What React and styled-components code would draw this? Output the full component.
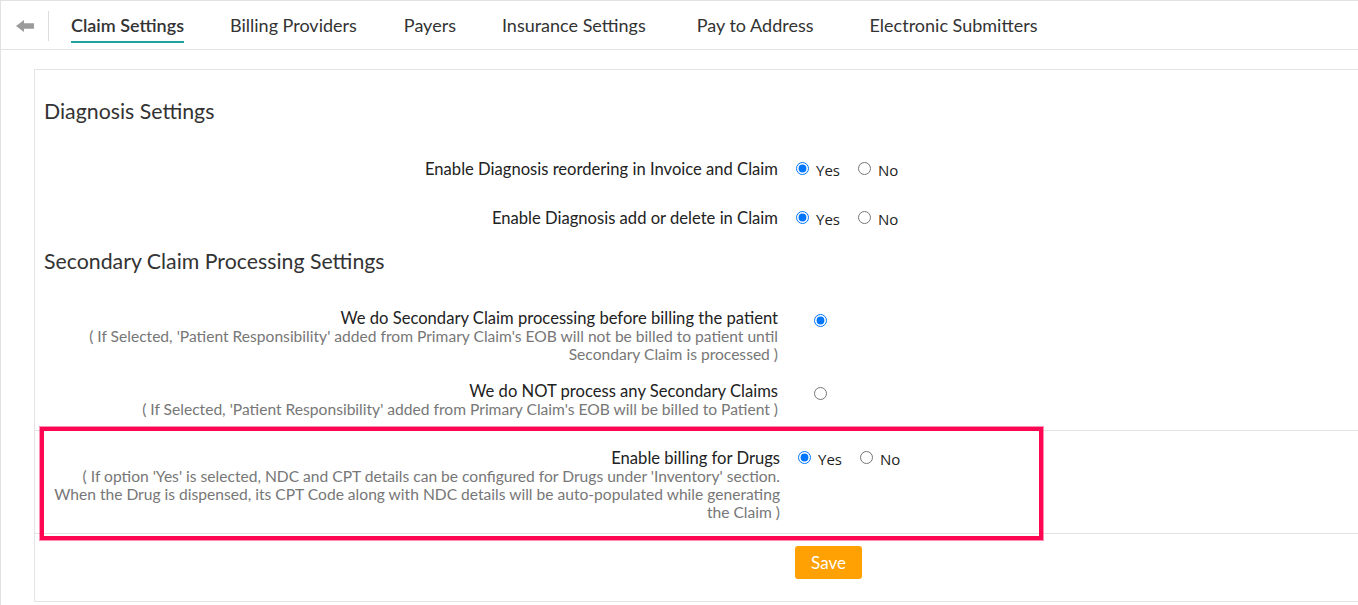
import React from 'react';
import styled, { createGlobalStyle } from 'styled-components';

const GlobalStyle = createGlobalStyle`
  html, body { margin: 0; padding: 0; background: #fff; }
  body { font-family: Lato, "Open Sans", sans-serif; color: #333; overflow: hidden; }
  * { box-sizing: border-box; }
`;

const Page = styled.div`
  width: 1358px;
  height: 605px;
  border-top: 1px solid #e2e2e2;
  border-left: 1px solid #e2e2e2;
  overflow: hidden;
`;

const Nav = styled.nav`
  display: flex;
  align-items: flex-start;
  height: 49px;
  border-bottom: 1px solid #e4e4e4;
`;

const BackButton = styled.button`
  width: 48px;
  height: 30px;
  margin-top: 10px;
  padding: 0;
  background: none;
  border: none;
  border-right: 1px solid #dcdcdc;
  display: flex;
  align-items: center;
  justify-content: center;
  cursor: pointer;
`;

const TabList = styled.div`
  display: flex;
  margin-left: 22px;
`;

const Tab = styled.a`
  margin-left: ${p => p.$gap}px;
  padding: 14px 0 6px;
  font-size: 18px;
  line-height: 20px;
  color: #333;
  font-weight: ${p => (p.$active ? 600 : 400)};
  border-bottom: 2px solid ${p => (p.$active ? '#1ea39d' : 'transparent')};
  text-decoration: none;
  white-space: nowrap;
  cursor: pointer;
`;

const Panel = styled.section`
  margin: 19px 0 0 33px;
  border: 1px solid #e4e4e4;
  border-right: none;
`;

const Heading = styled.h2`
  margin: ${p => p.$mt}px 0 ${p => p.$mb}px 9px;
  font-size: 21.3px;
  line-height: 24px;
  font-weight: 400;
  color: #333;
`;

const Row = styled.div`
  position: relative;
  display: grid;
  grid-template-columns: ${p => p.$labelWidth || 743}px auto;
  column-gap: 18px;
  align-items: start;
  padding: ${p => p.$pt}px 0 ${p => p.$pb}px;
  border-top: ${p => (p.$bordered ? '1px solid #e2e2e2' : 'none')};
  border-bottom: ${p => (p.$bordered ? '1px solid #e2e2e2' : 'none')};
`;

const Label = styled.div`
  text-align: right;
  font-size: 16.6px;
  line-height: 18px;
  color: #222;
  white-space: nowrap;
`;

const Desc = styled.div`
  font-size: 15.6px;
  line-height: 18px;
  color: #777;
`;

const Options = styled.div`
  display: flex;
  align-items: center;
  height: 18px;
  padding-left: ${p => p.$indent || 0}px;
`;

const Option = styled.label`
  display: inline-flex;
  align-items: center;
  gap: 7px;
  margin-right: 18px;
  font-family: "Open Sans", sans-serif;
  font-size: 15px;
  color: #222;
  line-height: 18px;
  padding-top: 2px;
`;

const Radio = styled.input`
  margin: 0;
  width: 13px;
  height: 13px;
  margin-top: ${p => (p.$standalone ? 4 : -3)}px;
`;

const Highlight = styled.div`
  position: absolute;
  left: 5px;
  top: -4px;
  width: 1003px;
  bottom: -7px;
  border: 4px solid #ff0652;
  box-shadow: 0 0 0 1px rgba(255, 6, 82, 0.45);
  pointer-events: none;
`;

const SaveRow = styled.div`
  display: grid;
  grid-template-columns: 743px auto;
  column-gap: 17px;
  padding: 12px 0 22px;
`;

const SaveButton = styled.button`
  grid-column: 2;
  justify-self: start;
  width: 67px;
  height: 33px;
  border: none;
  border-radius: 3px;
  background: #ffa003;
  color: #fff;
  font-family: Lato, sans-serif;
  font-size: 17px;
  cursor: pointer;
`;

const BackArrow = () => (
  <svg width="18" height="12" viewBox="0 0 18 12" aria-hidden="true">
    <polygon points="0,6 8,0 8,3.3 18,3.3 18,8.7 8,8.7 8,12" fill="#9b9b9b" />
  </svg>
);

const YesNo = ({ name, value = 'yes' }) => (
  <Options>
    <Option>
      <Radio type="radio" name={name} defaultChecked={value === 'yes'} />
      Yes
    </Option>
    <Option>
      <Radio type="radio" name={name} defaultChecked={value === 'no'} />
      No
    </Option>
  </Options>
);

const tabs = [
  { label: 'Claim Settings', gap: 0 },
  { label: 'Billing Providers', gap: 46 },
  { label: 'Payers', gap: 47 },
  { label: 'Insurance Settings', gap: 46 },
  { label: 'Pay to Address', gap: 51 },
  { label: 'Electronic Submitters', gap: 56 },
];

export default function App() {
  return (
    <>
      <GlobalStyle />
      <Page>
        <Nav>
          <BackButton aria-label="Back">
            <BackArrow />
          </BackButton>
          <TabList>
            {tabs.map((t, i) => (
              <Tab key={t.label} $gap={t.gap} $active={i === 0}>
                {t.label}
              </Tab>
            ))}
          </TabList>
        </Nav>

        <Panel>
          <Heading $mt={29} $mb={22}>Diagnosis Settings</Heading>
          <Row $pt={15} $pb={16}>
            <Label>Enable Diagnosis reordering in Invoice and Claim</Label>
            <YesNo name="reorder" />
          </Row>
          <Row $pt={15} $pb={16}>
            <Label>Enable Diagnosis add or delete in Claim</Label>
            <YesNo name="adddelete" />
          </Row>

          <Heading $mt={6} $mb={21}>Secondary Claim Processing Settings</Heading>
          <Row $pt={15} $pb={9}>
            <Label>
              We do Secondary Claim processing before billing the patient
              <Desc>
                ( If Selected, 'Patient Responsibility' added from Primary Claim's EOB will not be billed to patient until
                <br />
                Secondary Claim is processed )
              </Desc>
            </Label>
            <Options $indent={18}>
              <Radio type="radio" name="secondary" $standalone defaultChecked />
            </Options>
          </Row>
          <Row $pt={10} $pb={12}>
            <Label>
              We do NOT process any Secondary Claims
              <Desc>
                ( If Selected, 'Patient Responsibility' added from Primary Claim's EOB will be billed to Patient )
              </Desc>
            </Label>
            <Options $indent={18}>
              <Radio type="radio" name="secondary" $standalone />
            </Options>
          </Row>

          <Row $pt={18} $pb={12} $bordered $labelWidth={745}>
            <Label>
              Enable billing for Drugs
              <Desc>
                ( If option 'Yes' is selected, NDC and CPT details can be configured for Drugs under 'Inventory' section.
                <br />
                When the Drug is dispensed, its CPT Code along with NDC details will be auto-populated while generating
                <br />
                the Claim )
              </Desc>
            </Label>
            <YesNo name="drugs" />
            <Highlight />
          </Row>

          <SaveRow>
            <SaveButton>Save</SaveButton>
          </SaveRow>
        </Panel>
      </Page>
    </>
  );
}
